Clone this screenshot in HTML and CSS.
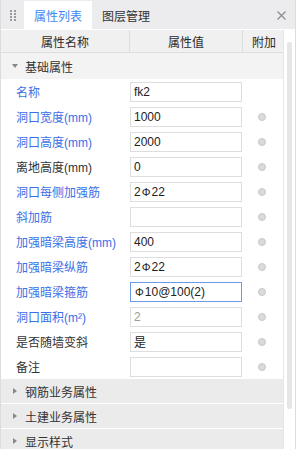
FILE: index.html
```html
<!DOCTYPE html>
<html>
<head>
<meta charset="utf-8">
<link rel="stylesheet" href="styles.css">
</head>
<body>
<div class="panel">
  <div class="tabs">
    <div class="handle"><i></i><i></i><i></i><i></i><i></i><i></i><i></i><i></i></div>
    <div class="tab active">属性列表</div>
    <div class="tab">图层管理</div>
    <div class="spacer"></div>
    <div class="close"><svg width="9" height="9" viewBox="0 0 9 9"><path d="M0.5 0.5 L8.5 8.5 M8.5 0.5 L0.5 8.5" stroke="#8c8c8c" stroke-width="1.2" fill="none"/></svg></div>
  </div>
  <div class="main">
    <div class="table">
      <div class="head">
        <div class="hc">属性名称</div>
        <div class="hc">属性值</div>
        <div class="hc last">附加</div>
      </div>
      <div class="group open"><span class="tri down"></span>基础属性</div>
      <div class="rows">
        <div class="row"><div class="lab blue">名称</div><div class="val"><div class="box">fk2</div></div><div class="add"></div></div>
        <div class="row"><div class="lab blue">洞口宽度(mm)</div><div class="val"><div class="box">1000</div></div><div class="add"><span class="dot"></span></div></div>
        <div class="row"><div class="lab blue">洞口高度(mm)</div><div class="val"><div class="box">2000</div></div><div class="add"><span class="dot"></span></div></div>
        <div class="row"><div class="lab">离地高度(mm)</div><div class="val"><div class="box">0</div></div><div class="add"><span class="dot"></span></div></div>
        <div class="row"><div class="lab blue">洞口每侧加强筋</div><div class="val"><div class="box">2<span class="bar">Φ</span>22</div></div><div class="add"><span class="dot"></span></div></div>
        <div class="row"><div class="lab blue">斜加筋</div><div class="val"><div class="box"></div></div><div class="add"><span class="dot"></span></div></div>
        <div class="row"><div class="lab blue">加强暗梁高度(mm)</div><div class="val"><div class="box">400</div></div><div class="add"><span class="dot"></span></div></div>
        <div class="row"><div class="lab blue">加强暗梁纵筋</div><div class="val"><div class="box">2<span class="bar">Φ</span>22</div></div><div class="add"><span class="dot"></span></div></div>
        <div class="row"><div class="lab blue">加强暗梁箍筋</div><div class="val"><div class="box focus"><span class="bar">Φ</span>10@100(2)</div></div><div class="add"><span class="dot"></span></div></div>
        <div class="row"><div class="lab blue">洞口面积(m²)</div><div class="val"><div class="box gray">2</div></div><div class="add"><span class="dot"></span></div></div>
        <div class="row"><div class="lab">是否随墙变斜</div><div class="val"><div class="box">是</div></div><div class="add"><span class="dot"></span></div></div>
        <div class="row"><div class="lab">备注</div><div class="val"><div class="box"></div></div><div class="add"><span class="dot"></span></div></div>
      </div>
      <div class="group closed"><span class="tri right"></span>钢筋业务属性</div>
      <div class="group closed"><span class="tri right"></span>土建业务属性</div>
      <div class="group closed"><span class="tri right"></span>显示样式</div>
    </div>
    <div class="scroll"><div class="thumb"></div></div>
  </div>
</div>
</body>
</html>
```

FILE: styles.css
```css
* { box-sizing: border-box; }
html, body { margin: 0; padding: 0; background: #ffffff; }
body {
  font-family: "Liberation Sans", "Noto Sans CJK SC", sans-serif;
  font-size: 12px;
  color: #333333;
  width: 296px;
  height: 449px;
  overflow: hidden;
}
.panel {
  width: 296px;
  height: 449px;
  border-left: 1px solid #dcdcdc;
  border-right: 1px solid #dcdcdc;
  display: flex;
  flex-direction: column;
  overflow: hidden;
}
.tabs {
  height: 30px;
  flex: none;
  background: #ececee;
  display: flex;
  align-items: stretch;
  border-bottom: 1px solid #ffffff;
}
.handle {
  width: 23px;
  display: grid;
  grid-template-columns: 2px 2px;
  grid-template-rows: repeat(4, 2px);
  column-gap: 2px;
  row-gap: 1px;
  align-content: center;
  justify-content: center;
  padding-top: 1px;
}
.handle i { display: block; width: 2px; height: 2px; background: #9a9a9a; }
.tab {
  width: 68px;
  display: flex;
  align-items: center;
  justify-content: center;
  color: #333;
  margin-top: 1px;
}
.tab.active { background: #ffffff; color: #3d87f5; }
.tab + .tab { width: 70px; justify-content: flex-start; padding-left: 10px; }
.spacer { flex: 1; }
.close {
  width: 18px;
  display: flex;
  align-items: center;
  justify-content: flex-start;
  padding-top: 1px;
}
.close svg { display: block; }
.main { flex: 1; display: flex; min-height: 0; }
.table { width: 282px; flex: none; display: flex; flex-direction: column; }
.scroll { flex: 1; position: relative; background: #ffffff; border-left: 1px solid #e6e6e6; }
.thumb {
  position: absolute;
  left: 3px;
  top: 12px;
  width: 5px;
  height: 367px;
  background: #e6e6e6;
  border-radius: 2px;
}
.head {
  height: 23px;
  flex: none;
  display: grid;
  grid-template-columns: 129px 113px 1fr;
  background: #f0f0f0;
  border-bottom: 1px solid #dedede;
}
.hc {
  display: flex;
  align-items: center;
  justify-content: center;
  border-right: 1px solid #dcdcdc;
  color: #2a2a2a;
}
.hc.last { border-right: none; padding-left: 2px; }
.group {
  height: 25px;
  flex: none;
  display: flex;
  align-items: center;
  padding-left: 10px;
  color: #333;
}
.group.open { background: #f3f3f3; height: 26px; }
.group.closed { background: #ebebeb; border-bottom: 1px solid #ffffff; }
.tri { display: inline-block; width: 0; height: 0; margin-right: 7px; }
.tri.down { border-left: 3px solid transparent; border-right: 3px solid transparent; border-top: 4px solid #888; margin-left: 1px; }
.tri.right { border-top: 3px solid transparent; border-bottom: 3px solid transparent; border-left: 4px solid #888; margin-left: 2px; margin-right: 8px; }
.rows { flex: none; }
.row {
  height: 25px;
  display: grid;
  grid-template-columns: 129px 113px 1fr;
  align-items: center;
}
.lab { padding-left: 15px; white-space: nowrap; color: #333; }
.lab.blue { color: #3b6fe6; }
.box {
  width: 112px;
  height: 20px;
  border: 1px solid #dedede;
  padding-left: 3px;
  display: flex;
  align-items: center;
  color: #222;
  white-space: nowrap;
}
.box.focus { border-color: #6f9be6; }
.box.gray { color: #9a9a9a; }
.bar { font-size: 11px; margin: 0 1px; }
.add { display: flex; justify-content: center; padding-right: 2px; }
.dot {
  width: 8px;
  height: 8px;
  border-radius: 50%;
  background: #dadada;
  border: 1px solid #c8c8c8;
}
```
